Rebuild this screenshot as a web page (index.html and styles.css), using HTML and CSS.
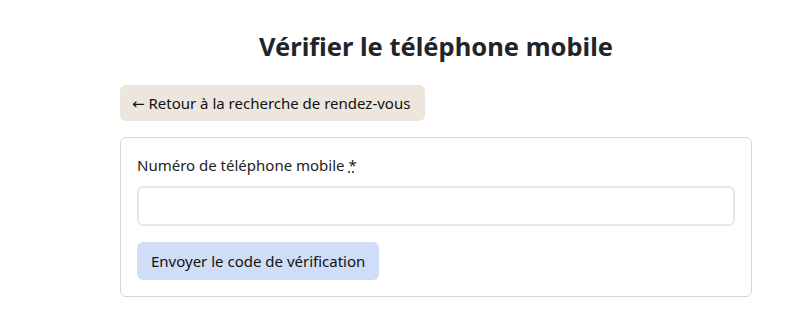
FILE: index.html
```html
<!DOCTYPE html>
<html lang="fr">
<head>
<meta charset="utf-8">
<title>Vérifier le téléphone mobile</title>
<link rel="stylesheet" href="styles.css">
</head>
<body>
<main class="page">
  <h1 class="title">Vérifier le téléphone mobile</h1>
  <div class="back-row"><a class="btn btn-back" href="#">← Retour à la recherche de rendez-vous</a></div>
  <form class="card">
    <label class="label" for="phone">Numéro de téléphone mobile <abbr class="req" title="obligatoire">*</abbr></label>
    <input class="input" id="phone" type="tel">
    <div class="actions"><button class="btn btn-primary" type="button">Envoyer le code de vérification</button></div>
  </form>
</main>
</body>
</html>
```
FILE: styles.css
```css
* { box-sizing: border-box; }
html, body { margin: 0; background: #ffffff; }
body {
  font-family: "Noto Sans", "Open Sans", "DejaVu Sans", sans-serif;
  color: #212529;
  font-size: 15px;
}
.page {
  width: 632px;
  margin-left: 120px;
  padding-top: 27px;
}
.title {
  margin: 0 0 20px;
  text-align: center;
  font-size: 25.5px;
  font-weight: 700;
  line-height: 38px;
  color: #212529;
}
.back-row { margin-bottom: 16px; }
.btn {
  display: inline-block;
  border: 0;
  border-radius: 6px;
  font: inherit;
  color: #111;
  text-decoration: none;
  cursor: pointer;
}
.btn-back {
  background: #ede6de;
  height: 36px;
  line-height: 36px;
  padding: 0 12px;
  width: 305px;
}
.card {
  display: block;
  border: 1px solid #d6d6d6;
  border-radius: 6px;
  padding: 16px 16px 16px 16px;
}
.label {
  display: block;
  font-size: 15px;
  line-height: 22px;
  margin: 0 0 10px;
  color: #222;
}
.req { text-decoration: underline dotted; }
.input {
  display: block;
  width: 100%;
  height: 40px;
  border: 2px solid #ece7de;
  border-radius: 6px;
  background: #fff;
  margin: 0 0 16px;
}
.btn-primary {
  background: #d0ddf6;
  height: 38px;
  line-height: 38px;
  padding: 0 14px;
  font-size: 15px;
}
```
